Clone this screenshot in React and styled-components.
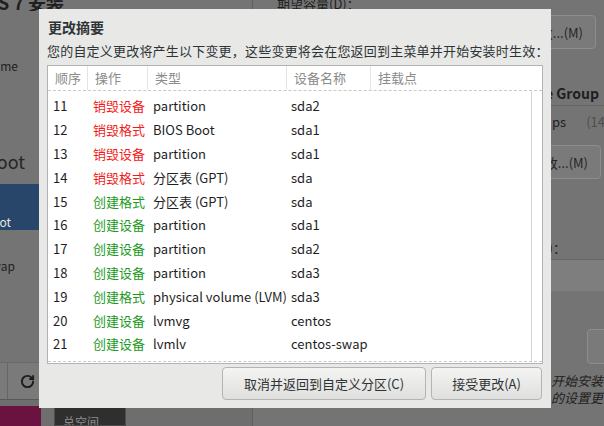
import React from "react";
import styled, { createGlobalStyle } from "styled-components";
import { RotateCw } from "lucide-react";

const GlobalStyle = createGlobalStyle`
  html, body {
    margin: 0;
    padding: 0;
    width: 604px;
    height: 426px;
    overflow: hidden;
    background: #747474;
  }
  * {
    box-sizing: border-box;
  }
`;

const FONT = `"Noto Sans CJK SC", "Noto Sans", sans-serif`;

const rows = [
  [11, "destroy", "销毁设备", "partition", "sda2"],
  [12, "destroy", "销毁格式", "BIOS Boot", "sda1"],
  [13, "destroy", "销毁设备", "partition", "sda1"],
  [14, "destroy", "销毁格式", "分区表 (GPT)", "sda"],
  [15, "create", "创建格式", "分区表 (GPT)", "sda"],
  [16, "create", "创建设备", "partition", "sda1"],
  [17, "create", "创建设备", "partition", "sda2"],
  [18, "create", "创建设备", "partition", "sda3"],
  [19, "create", "创建格式", "physical volume (LVM)", "sda3"],
  [20, "create", "创建设备", "lvmvg", "centos"],
  [21, "create", "创建设备", "lvmlv", "centos-swap"],
  [22, "create", "创建设备", "lvmlv", "centos-root"],
];

// ---------- background (dimmed installer) ----------

const Screen = styled.div`
  position: relative;
  width: 604px;
  height: 426px;
  overflow: hidden;
  display: flex;
  background: #747474;
  font-family: ${FONT};
  color: #1f1f1f;
`;

const LeftPane = styled.div`
  width: 253px;
  flex-shrink: 0;
  display: flex;
  flex-direction: column;
  border-right: 1px solid #5f5f5f;
`;

const Clip = styled.div`
  width: ${(p) => p.$w}px;
  overflow: hidden;
  display: flex;
  justify-content: flex-end;
  white-space: nowrap;
  margin-top: ${(p) => p.$mt || 0}px;
  font-size: ${(p) => p.$size || 13}px;
  font-weight: ${(p) => (p.$bold ? 700 : 400)};
  line-height: ${(p) => p.$lh || 16}px;
  color: ${(p) => p.$color || "#1f1f1f"};
`;

const AppTitle = styled.div`
  margin-top: -7px;
  font-size: 18px;
  font-weight: 700;
  line-height: 18px;
  color: #1f1f1f;
  white-space: nowrap;
  overflow: hidden;
  width: 64px;
  display: flex;
  justify-content: flex-end;
`;

const SelectedRow = styled.div`
  margin-top: 12px;
  height: 46px;
  padding-top: 30px;
  background: #28466a;
`;

const Spacer = styled.div`
  flex: 1;
`;

const Toolbar = styled.div`
  height: 38px;
  border-top: 1px solid #6a6a6a;
  border-bottom: 1px solid #585858;
  background: #7a7a7a;
  display: flex;
`;

const ToolCell = styled.div`
  width: ${(p) => p.$w}px;
  height: 100%;
  border-right: 1px solid #666;
  display: flex;
  align-items: center;
  justify-content: flex-start;
  padding-left: ${(p) => p.$pl || 0}px;
  color: #1c1c1c;
`;

const BottomStrip = styled.div`
  height: 26px;
  padding-top: 6px;
  display: flex;
  gap: 13px;
  background: #6e6e6e;
`;

const SpaceBar = styled.div`
  width: 41px;
  background: #6b1340;
`;

const SpaceBox = styled.div`
  width: 72px;
  background: #2f2f2f;
  border: 1px solid #4c4c4c;
  color: #8c8c8c;
  font-size: 12px;
  line-height: 12px;
  padding: 9px 0 0 8px;
  overflow: hidden;
`;

const RightPane = styled.div`
  flex: 1;
  display: flex;
  flex-direction: column;
  padding-left: 24px;
`;

const Label = styled.div`
  margin-top: -4px;
  font-size: 13px;
  line-height: 16px;
  white-space: nowrap;
`;

const RightCol = styled.div`
  margin-left: 266px;
  width: 90px;
  display: flex;
  flex-direction: column;
`;

const GhostButton = styled.div`
  margin-top: ${(p) => p.$mt}px;
  margin-left: ${(p) => p.$ml || 0}px;
  width: ${(p) => p.$w}px;
  height: ${(p) => p.$h || 34}px;
  border: 1px solid #8d8d8d;
  border-radius: 4px;
  background: #7a7a7a;
  display: flex;
  align-items: center;
  justify-content: flex-end;
  padding-right: 12px;
  overflow: hidden;
  white-space: nowrap;
  font-size: 13px;
  color: #252525;
`;

const Rule = styled.div`
  margin-top: ${(p) => p.$mt}px;
  height: 1px;
  background: #636363;
`;

const InfoRow = styled.div`
  margin-top: 8px;
  display: flex;
  gap: 20px;
  font-size: 13px;
  line-height: 16px;
  padding-left: 9px;
  white-space: nowrap;
  span + span {
    color: #4e4e4e;
  }
`;

const InputBand = styled.div`
  margin-top: 3px;
  height: 32px;
  border-top: 1px solid #666;
  background: #7e7e7e;
`;

const Note = styled.div`
  margin-top: ${(p) => p.$mt || 0}px;
  padding-left: 8px;
  font-size: 13px;
  line-height: 17px;
  white-space: nowrap;
  font-style: italic;
`;

// ---------- dialog ----------

const Dialog = styled.div`
  position: absolute;
  left: 39px;
  top: 9px;
  width: 512px;
  height: 399px;
  background: #e8e8e7;
  padding: 10px 8px 8px 8px;
  display: flex;
  flex-direction: column;
  color: #2e3436;
`;

const Title = styled.div`
  font-size: 14px;
  font-weight: 700;
  line-height: 16px;
  padding-left: 1px;
`;

const Subtitle = styled.div`
  margin-top: 8px;
  font-size: 13px;
  line-height: 16px;
  letter-spacing: 0.2px;
  white-space: nowrap;
`;

const Table = styled.div`
  margin-top: 6px;
  height: 299px;
  border: 1px solid #b3b3b3;
  background: #fff;
  display: flex;
  flex-direction: column;
`;

const COLS = "40px 60px 139px 84px 1fr";

const HeaderRow = styled.div`
  height: 25px;
  flex-shrink: 0;
  display: grid;
  grid-template-columns: ${COLS};
  border-bottom: 1px dashed #c9c9c9;
`;

const HeadCell = styled.div`
  padding-left: 7px;
  font-size: 13px;
  line-height: 24px;
  color: #8b8b8b;
  border-right: ${(p) => (p.$last ? "none" : "1px solid #e4e4e4")};
  white-space: nowrap;
`;

const Body = styled.div`
  flex: 1;
  display: flex;
  overflow: hidden;
  border-bottom: 1px dashed #c9c9c9;
  margin-bottom: 1px;
`;

const RowList = styled.div`
  flex: 1;
  padding-top: 3px;
`;

const Gutter = styled.div`
  width: 11px;
  border-left: 1px solid #d6d6d6;
`;

const Row = styled.div`
  height: 23.8px;
  display: grid;
  grid-template-columns: ${COLS};
  align-items: center;
  font-size: 13px;
  color: #1e1e1e;
`;

const Cell = styled.div`
  padding-left: ${(p) => p.$pl ?? 5}px;
  white-space: nowrap;
  color: ${(p) =>
    p.$action === "destroy" ? "#f21b1b" : p.$action === "create" ? "#1d9a1d" : "inherit"};
`;

const ButtonBar = styled.div`
  margin-top: 3px;
  display: flex;
  justify-content: flex-end;
  gap: 5px;
  padding-right: 1px;
`;

const Button = styled.button`
  width: ${(p) => p.$w}px;
  height: 33px;
  border: 1px solid #b4b4b4;
  border-radius: 4px;
  background: linear-gradient(#f4f4f3, #dfdfde);
  font-family: ${FONT};
  font-size: 13px;
  color: #2e3436;
  padding: 0;
`;

export default function App() {
  return (
    <>
      <GlobalStyle />
      <Screen>
        <LeftPane>
          <AppTitle>CentOS 7 安装</AppTitle>
          <Clip $w={18} $mt={47} $size={12}>/home</Clip>
          <Clip $w={25} $mt={76} $size={18} $lh={22} $color="#262626">/boot</Clip>
          <SelectedRow>
            <Clip $w={11} $size={12} $color="#e6e6e6">/boot</Clip>
          </SelectedRow>
          <Clip $w={15} $mt={28} $size={12}>swap</Clip>
          <Spacer />
          <Toolbar>
            <ToolCell $w={8} />
            <ToolCell $w={40} $pl={12}>
              <RotateCw size={15} strokeWidth={3} />
            </ToolCell>
          </Toolbar>
          <BottomStrip>
            <SpaceBar />
            <SpaceBox>总空间</SpaceBox>
          </BottomStrip>
        </LeftPane>
        <RightPane>
          <Label>期望容量(D)：</Label>
          <RightCol>
            <GhostButton $mt={3} $w={53}>修改...(M)</GhostButton>
            <Clip $w={56} $mt={34} $size={14} $bold $lh={20}>Volume Group</Clip>
            <Rule $mt={2} />
            <InfoRow>
              <span>ps</span>
              <span>(14</span>
            </InfoRow>
            <GhostButton $mt={15} $w={58}>修改...(M)</GhostButton>
            <Clip $w={23} $mt={61}>)：</Clip>
            <InputBand />
            <GhostButton $mt={38} $ml={44} $w={40} $h={35} />
            <Note $mt={8}>开始安装</Note>
            <Note>的设置更改</Note>
          </RightCol>
        </RightPane>

        <Dialog>
          <Title>更改摘要</Title>
          <Subtitle>您的自定义更改将产生以下变更，这些变更将会在您返回到主菜单并开始安装时生效：</Subtitle>
          <Table>
            <HeaderRow>
              <HeadCell>顺序</HeadCell>
              <HeadCell>操作</HeadCell>
              <HeadCell>类型</HeadCell>
              <HeadCell>设备名称</HeadCell>
              <HeadCell $last>挂载点</HeadCell>
            </HeaderRow>
            <Body>
              <RowList>
                {rows.map(([n, kind, action, type, dev]) => (
                  <Row key={n}>
                    <Cell>{n}</Cell>
                    <Cell $action={kind}>{action}</Cell>
                    <Cell>{type}</Cell>
                    <Cell $pl={4}>{dev}</Cell>
                    <Cell />
                  </Row>
                ))}
              </RowList>
              <Gutter />
            </Body>
          </Table>
          <ButtonBar>
            <Button $w={204}>取消并返回到自定义分区(C)</Button>
            <Button $w={111}>接受更改(A)</Button>
          </ButtonBar>
        </Dialog>
      </Screen>
    </>
  );
}
